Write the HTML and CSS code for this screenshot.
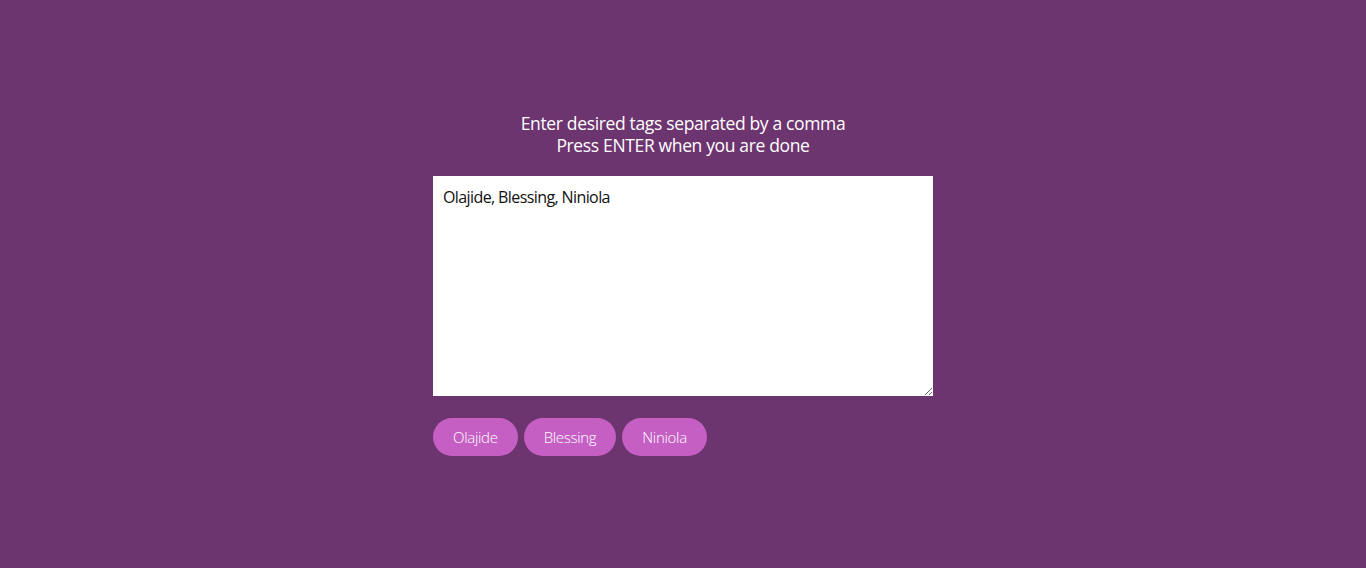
FILE: index.html
```html
<!DOCTYPE html>
<html lang="en">
<head>
<meta charset="utf-8">
<title>Tags</title>
<link rel="stylesheet" href="styles.css">
</head>
<body>
<div class="container">
  <p class="instructions">Enter desired tags separated by a comma<br>Press ENTER when you are done</p>
  <textarea class="input" spellcheck="false">Olajide, Blessing, Niniola</textarea>
  <div class="tags">
    <span class="tag">Olajide</span>
    <span class="tag">Blessing</span>
    <span class="tag">Niniola</span>
  </div>
</div>
</body>
</html>
```

FILE: styles.css
```css
* { box-sizing: border-box; }
html, body {
  margin: 0;
  height: 100%;
}
body {
  background: #6d356f;
  font-family: "Open Sans", sans-serif;
  color: #fff;
}
.container {
  width: 500px;
  margin: 0 auto;
  padding-top: 112px;
}
.instructions {
  margin: 0 0 20px;
  text-align: center;
  font-size: 17.5px;
  line-height: 22px;
  letter-spacing: -0.35px;
}
.input {
  display: block;
  width: 500px;
  height: 220px;
  border: none;
  outline: none;
  padding: 10px 10px;
  font-family: inherit;
  font-size: 16px;
  letter-spacing: -0.6px;
  color: #111;
  background: #fff;
  resize: both;
}
.tags {
  display: flex;
  gap: 6px;
  margin-top: 22px;
}
.tag {
  display: inline-flex;
  align-items: center;
  height: 38px;
  padding: 0 20px;
  border-radius: 19px;
  background: #c65fc4;
  color: #fff;
  font-size: 15px;
  letter-spacing: -0.3px;
  font-weight: 300;
}
```
